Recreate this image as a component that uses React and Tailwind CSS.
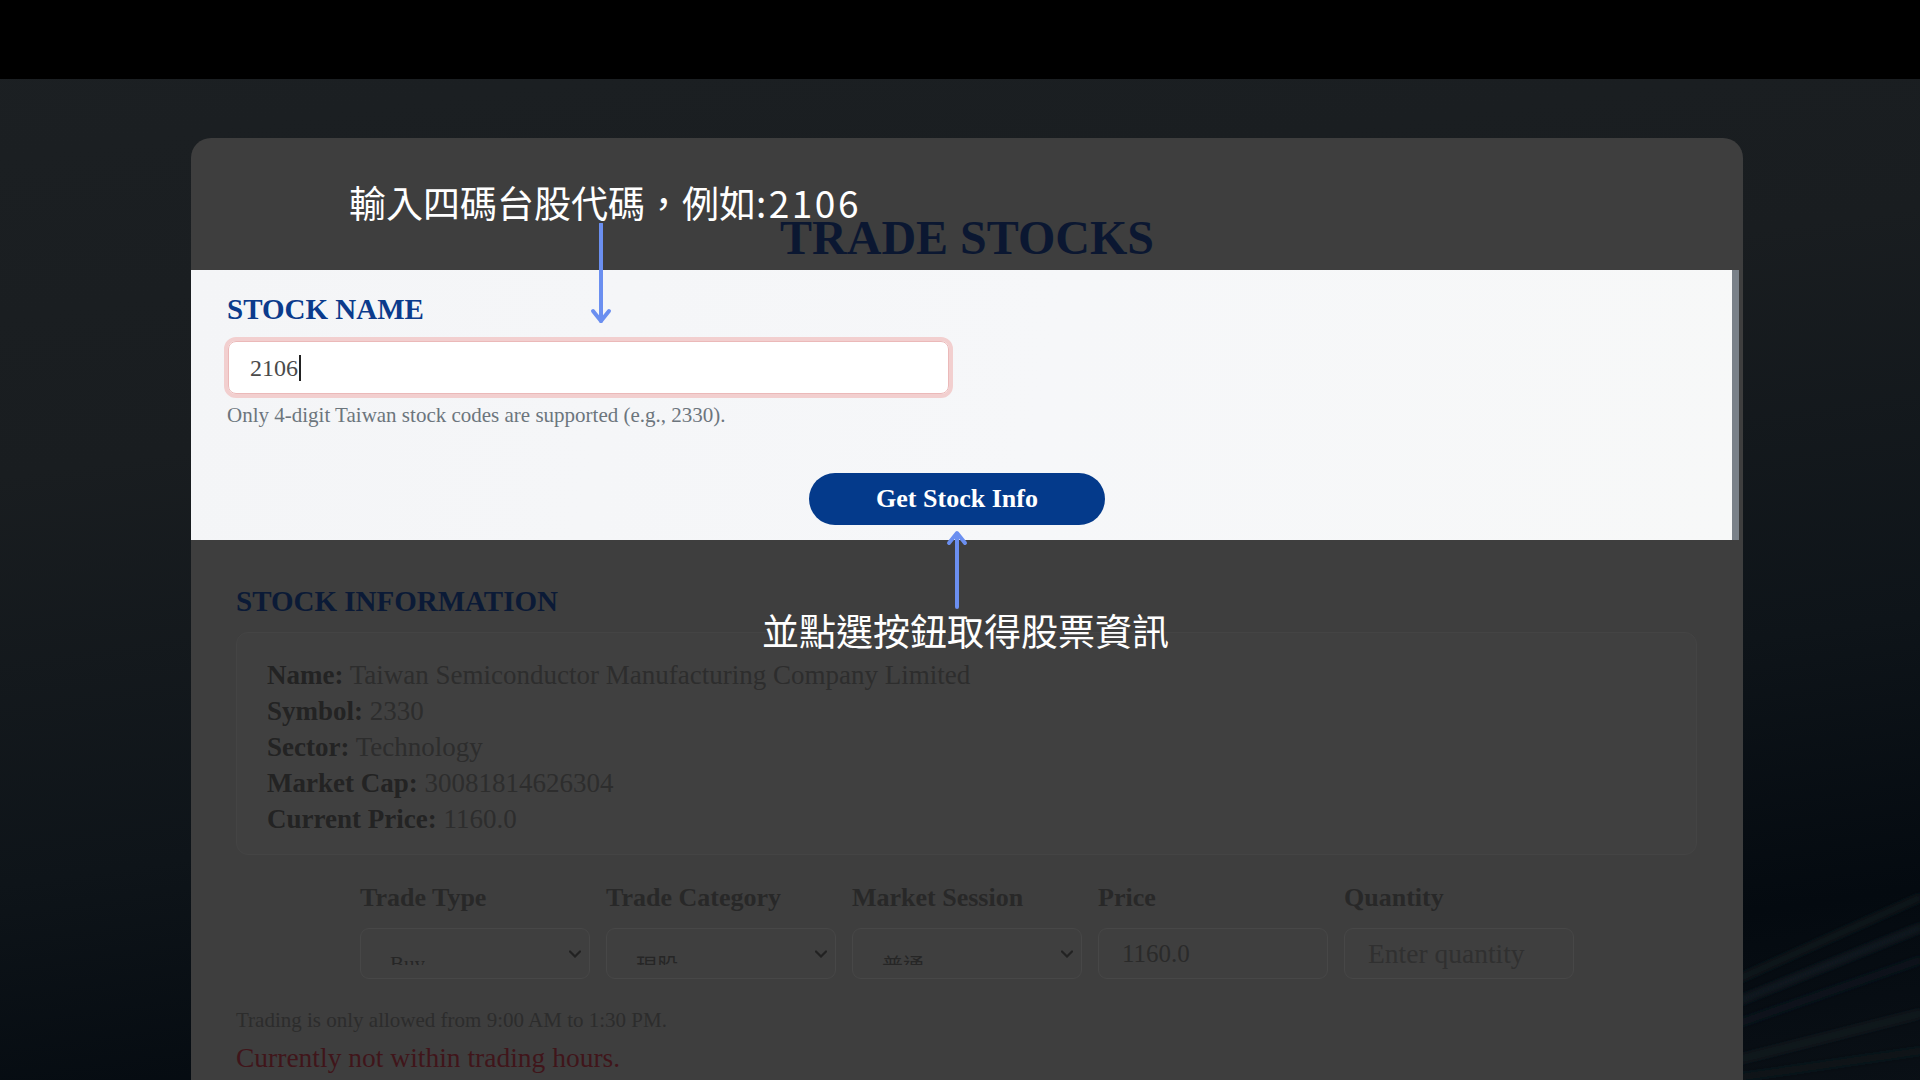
const serif = { fontFamily: '"Liberation Serif", "Times New Roman", serif' };
const cjk = { fontFamily: '"Noto Sans CJK TC", "Noto Sans", sans-serif' };

const info = [
  ["Name:", "Taiwan Semiconductor Manufacturing Company Limited"],
  ["Symbol:", "2330"],
  ["Sector:", "Technology"],
  ["Market Cap:", "30081814626304"],
  ["Current Price:", "1160.0"],
];

function Chevron() {
  return (
    <svg width="12" height="8" viewBox="0 0 12 8" className="shrink-0">
      <path d="M1 1.5 L6 6.5 L11 1.5" fill="none" stroke="#222222" strokeWidth="2.2" strokeLinecap="round" />
    </svg>
  );
}

// the select text is cut through the middle in the source, so only its top half shows
function DimSelect({ value, cjkText }) {
  return (
    <div className="flex h-[51px] w-[230px] items-center justify-between rounded-[9px] border border-[#474747] bg-[#3f3f3f] pl-[29px] pr-[8px]">
      <div className="mt-[12px] h-[11px] overflow-hidden">
        <span className="block text-[21px] leading-none text-[#262626]" style={cjkText ? cjk : undefined}>
          {value}
        </span>
      </div>
      <Chevron />
    </div>
  );
}

function DimInput({ value, placeholder }) {
  return (
    <div className="flex h-[51px] w-[230px] items-center rounded-[9px] border border-[#474747] bg-[#3f3f3f] px-[23px]">
      <span className={value ? "text-[25px] leading-none text-[#2a2a2a]" : "text-[27.5px] leading-none text-[#303030]"}>
        {value || placeholder}
      </span>
    </div>
  );
}

function Streaks() {
  return (
    <svg className="pointer-events-none absolute inset-0 h-full w-full" viewBox="0 0 1920 1080" preserveAspectRatio="none">
      <defs>
        <filter id="soft" x="-10%" y="-50%" width="120%" height="200%">
          <feGaussianBlur stdDeviation="3" />
        </filter>
      </defs>
      <g filter="url(#soft)" fill="none" strokeLinecap="round">
        <path d="M1740 968 L1920 888" stroke="#1d252c" strokeWidth="6" opacity="0.55" />
        <path d="M1740 990 L1920 918" stroke="#1f272e" strokeWidth="7" opacity="0.55" />
        <path d="M1740 1012 L1920 950" stroke="#1c2329" strokeWidth="6" opacity="0.5" />
        <path d="M1740 1048 L1920 1003" stroke="#20272d" strokeWidth="7" opacity="0.5" />
        <path d="M1740 1066 L1920 1040" stroke="#1c2328" strokeWidth="6" opacity="0.45" />
      </g>
    </svg>
  );
}

export default function App() {
  return (
    <div
      className="relative min-h-screen w-full overflow-hidden bg-[linear-gradient(172deg,#1c2023_0%,#191d20_35%,#0e1419_65%,#040a10_85%,#0a1016_100%)]"
      style={serif}
    >
      <Streaks />
      <div className="relative h-[79px] bg-black" />

      <div className="relative pl-[191px] pt-[59px]">
        <div className="relative w-[1552px] overflow-hidden rounded-t-[20px] bg-[#3e3e3e]">
          {/* title area */}
          <div className="h-[132px] pt-[76px] text-center">
            <h1 className="text-[48px] font-bold leading-none text-[#0b1731]">TRADE STOCKS</h1>
          </div>

          {/* highlighted form */}
          <div className="mr-[4px] flex h-[270px] bg-[linear-gradient(100deg,#f4f5f7_0%,#f6f7f9_55%,#f7f8f8_100%)]">
            <div className="flex-1 pl-[36px] pt-[25px]">
              <h2 className="text-[29px] font-bold leading-none text-[#0b3b8c]">STOCK NAME</h2>
              <div className="-ml-[3px] mt-[13px] h-[61px] w-[729px] rounded-[12px] border-[4px] border-[#f2cfcf] bg-white">
                <div className="flex h-full items-center rounded-[8px] border border-[#ebb9b9] pl-[21px]">
                  <span className="text-[24px] leading-none text-[#4a4a4a]">2106</span>
                  <span className="ml-[1px] h-[26px] w-[1.5px] bg-[#222]" />
                </div>
              </div>
              <p className="mt-[7px] text-[21px] leading-none text-[#6c757d]">
                Only 4-digit Taiwan stock codes are supported (e.g., 2330).
              </p>
              <button className="ml-[582px] mt-[47px] h-[52px] w-[296px] rounded-full bg-[#043a8b] text-[26px] font-bold leading-none text-white">
                Get Stock Info
              </button>
            </div>
            <div className="w-[7px] bg-[#7a8189]" />
          </div>

          {/* dimmed information */}
          <div className="px-[45px] pb-[20px] pt-[47px]">
            <h2 className="text-[29px] font-bold leading-none text-[#0b1a36]">STOCK INFORMATION</h2>
            <div className="mt-[16px] h-[223px] w-[1461px] rounded-[12px] border border-[#444444] bg-[#404040] pl-[30px] pt-[24px]">
              {info.map(([label, value]) => (
                <p key={label} className="whitespace-nowrap text-[27px] leading-[36px] text-[#2d2d2d]">
                  <span className="font-bold text-[#232323]">{label}</span> {value}
                </p>
              ))}
            </div>

            <div className="mt-[30px] flex justify-center gap-[16px]">
              {[
                ["Trade Type", <DimSelect key="a" value="Buy" />],
                ["Trade Category", <DimSelect key="b" value="現股" cjkText />],
                ["Market Session", <DimSelect key="c" value="普通" cjkText />],
                ["Price", <DimInput key="d" value="1160.0" />],
                ["Quantity", <DimInput key="e" placeholder="Enter quantity" />],
              ].map(([label, field]) => (
                <div key={label} className="flex w-[230px] flex-col">
                  <span className="whitespace-nowrap text-[26px] font-bold leading-none text-[#282828]">{label}</span>
                  <div className="mt-[17px]">{field}</div>
                </div>
              ))}
            </div>

            <p className="mt-[31px] text-[21px] leading-none text-[#2c2c2c]">
              Trading is only allowed from 9:00 AM to 1:30 PM.
            </p>
            <p className="mt-[13px] whitespace-nowrap text-[27.5px] leading-none text-[#40151a]">
              Currently not within trading hours.
            </p>
          </div>
        </div>
      </div>

      {/* tutorial annotations */}
      <div className="absolute left-[349px] top-[184px] whitespace-nowrap text-[37px] leading-none text-white" style={cjk}>
        輸入四碼台股代碼，例如<span className="tracking-[2.5px]">:2106</span>
      </div>
      <svg className="absolute left-[589px] top-[223px]" width="24" height="102" viewBox="0 0 24 102">
        <path d="M12 1 L12 98" stroke="#6b8ff0" strokeWidth="4" strokeLinecap="round" />
        <path d="M4 88 L12 98 L20 88" fill="none" stroke="#6b8ff0" strokeWidth="4" strokeLinecap="round" strokeLinejoin="round" />
      </svg>
      <svg className="absolute left-[945px] top-[530px]" width="24" height="80" viewBox="0 0 24 80">
        <path d="M12 4 L12 77" stroke="#6b8ff0" strokeWidth="4" strokeLinecap="round" />
        <path d="M4 13 L12 3 L20 13" fill="none" stroke="#6b8ff0" strokeWidth="4" strokeLinecap="round" strokeLinejoin="round" />
      </svg>
      <div className="absolute left-[762px] top-[612px] whitespace-nowrap text-[37px] leading-none text-white" style={cjk}>
        並點選按鈕取得股票資訊
      </div>
    </div>
  );
}
